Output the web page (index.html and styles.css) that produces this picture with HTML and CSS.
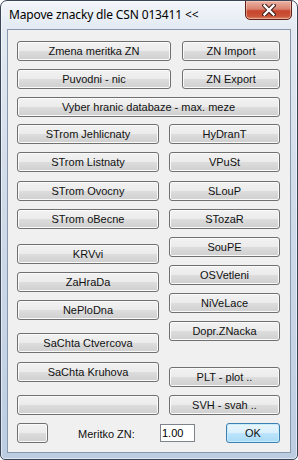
FILE: index.html
```html
<!DOCTYPE html>
<html lang="cs">
<head>
    <meta charset="UTF-8">
    <title>Mapove znacky dle CSN 013411</title>
    <link rel="stylesheet" href="styles.css">
</head>
<body>
    <div class="window">
        <div class="titlebar">
            <span class="title">Mapove znacky dle CSN 013411 &lt;&lt;</span>
            <button class="close">
                <svg width="14" height="12" viewBox="0 0 14 12">
                    <path d="M2.5 1.5 L11.5 10.5 M11.5 1.5 L2.5 10.5" stroke="#3a1a14" stroke-width="4.4" stroke-linecap="square"/>
                    <path d="M2.5 1.5 L11.5 10.5 M11.5 1.5 L2.5 10.5" stroke="#ffffff" stroke-width="2.4" stroke-linecap="square"/>
                </svg>
            </button>
        </div>

        <div class="client">
            <div class="row">
                <button class="btn w-main">Zmena meritka ZN</button>
                <button class="btn w-side">ZN Import</button>
            </div>
            <div class="row">
                <button class="btn w-main">Puvodni - nic</button>
                <button class="btn w-side">ZN Export</button>
            </div>
            <button class="btn w-full">Vyber hranic databaze - max. meze</button>

            <div class="cols">
                <div class="col col-left">
                    <button class="btn">STrom Jehlicnaty</button>
                    <button class="btn">STrom Listnaty</button>
                    <button class="btn mt1">STrom Ovocny</button>
                    <button class="btn">STrom oBecne</button>
                    <button class="btn mt7">KRVvi</button>
                    <button class="btn">ZaHraDa</button>
                    <button class="btn">NePloDna</button>
                    <button class="btn mt5">SaChta Ctvercova</button>
                    <button class="btn mt1">SaChta Kruhova</button>
                    <button class="btn mt5"></button>
                </div>
                <div class="col col-right">
                    <button class="btn">HyDranT</button>
                    <button class="btn">VPuSt</button>
                    <button class="btn mt1">SLouP</button>
                    <button class="btn">STozaR</button>
                    <button class="btn">SouPE</button>
                    <button class="btn">OSVetleni</button>
                    <button class="btn">NiVeLace</button>
                    <button class="btn">Dopr.ZNacka</button>
                    <button class="btn mt18">PLT - plot ..</button>
                    <button class="btn">SVH - svah ..</button>
                </div>
            </div>

            <div class="bottom">
                <button class="btn small"></button>
                <span class="label">Meritko ZN:</span>
                <input class="scale" type="text" value="1.00">
                <button class="btn ok">OK</button>
            </div>
        </div>
    </div>
</body>
</html>
```

FILE: styles.css
```css
body {
    margin: 0;
    padding: 0;
    background: #ffffff;
    font-family: "Liberation Sans", Arial, sans-serif;
    font-size: 11px;
}

.window {
    width: 298px;
    height: 460px;
    box-sizing: border-box;
    border: 1px solid #3a4657;
    border-radius: 7px 7px 5px 5px;
    background: linear-gradient(to bottom, #f3f6fa 0%, #e2e9f1 30px, #d0dbe9 200px, #bccde2 100%);
    box-shadow: inset 0 0 0 1px rgba(255, 255, 255, 0.55);
    display: flex;
    flex-direction: column;
    overflow: hidden;
}

.titlebar {
    height: 28px;
    flex-shrink: 0;
    display: flex;
    align-items: flex-start;
}

.title {
    padding: 5px 0 0 8px;
    font-family: "Noto Sans", "Open Sans", sans-serif;
    font-size: 12px;
    letter-spacing: -0.15px;
    line-height: 18px;
    color: #000;
    white-space: nowrap;
}

.close {
    margin: -1px 5px 0 auto;
    width: 47px;
    height: 20px;
    padding: 0;
    border: 1px solid #5e2219;
    border-radius: 0 0 5px 5px;
    background: linear-gradient(to bottom, #eab2a4 0%, #d9826f 45%, #c7442b 55%, #c9553a 85%, #e08a6a 100%);
    box-shadow: inset 0 0 0 1px rgba(255, 220, 210, 0.45);
    display: flex;
    justify-content: center;
    align-items: center;
}

.client {
    flex: 1;
    margin: 0 6px 6px 6px;
    border: 1px solid #8797ad;
    background: #f0f0f0;
    padding: 11px 10px 0 9px;
    display: flex;
    flex-direction: column;
    gap: 8px;
}

.btn {
    height: 20px;
    box-sizing: border-box;
    margin: 0;
    padding: 0;
    border: 1px solid #707070;
    border-radius: 3px;
    background: linear-gradient(to bottom, #f2f2f2 0%, #ebebeb 50%, #dddddd 50%, #cfcfcf 100%);
    box-shadow: inset 0 0 0 1px #fafafa;
    font-family: inherit;
    font-size: 11px;
    line-height: 18px;
    color: #111;
    text-align: center;
    white-space: nowrap;
}

.row {
    display: flex;
    gap: 11px;
}

.w-main {
    width: 154px;
}

.w-side {
    width: 98px;
}

.w-full {
    width: 100%;
}

.cols {
    display: flex;
    gap: 10px;
    margin-top: -1px;
}

.col {
    display: flex;
    flex-direction: column;
    gap: 8px;
}

.col-left {
    width: 142px;
}

.col-right {
    width: 111px;
}

.mt1 { margin-top: 1px; }
.mt5 { margin-top: 5px; }
.mt7 { margin-top: 7px; }
.mt18 { margin-top: 18px; }

.bottom {
    display: flex;
    align-items: flex-start;
}

.small {
    width: 31px;
}

.label {
    margin-left: 30px;
    width: 82px;
    padding-top: 5px;
    line-height: 13px;
    color: #111;
}

.scale {
    width: 35px;
    height: 18px;
    box-sizing: border-box;
    margin: 1px 0 0 0;
    padding: 0 1px;
    border: 1px solid #7f848c;
    background: #fff;
    font-family: inherit;
    font-size: 11px;
    color: #000;
}

.ok {
    margin-left: 31px;
    width: 54px;
    border-color: #3c7fb1;
    background: linear-gradient(to bottom, #eaf6fd 0%, #d9f0fc 50%, #bee6fd 50%, #a7d9f5 100%);
    box-shadow: inset 0 0 0 1px #c9ecfd;
}
```
